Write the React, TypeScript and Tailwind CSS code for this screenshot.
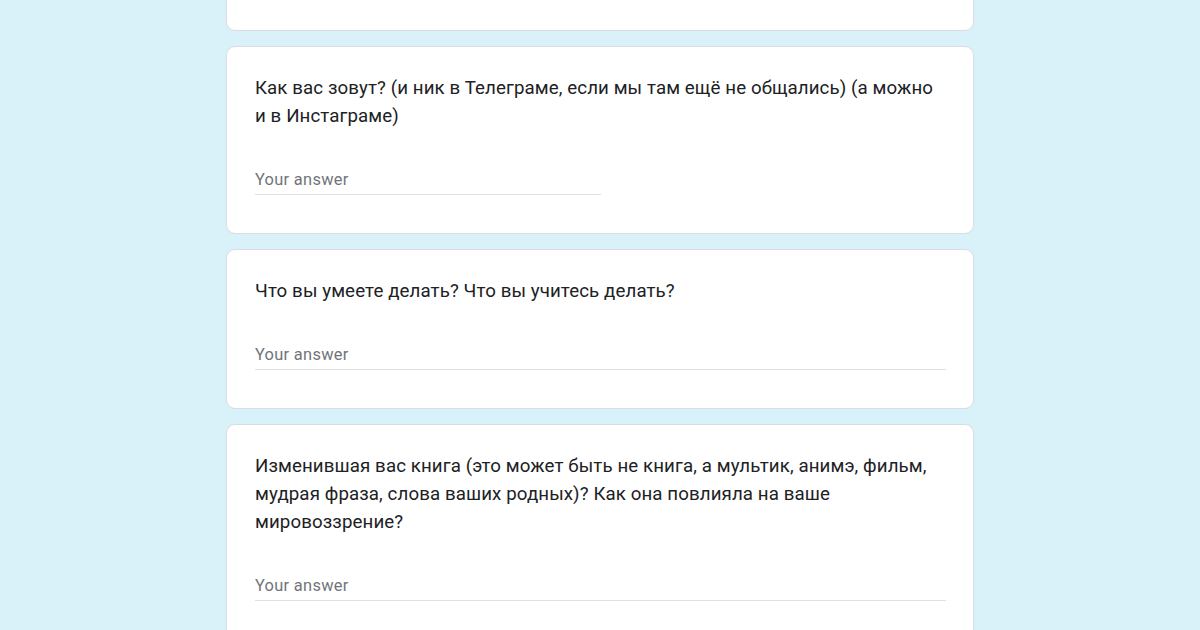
const questions = [
  {
    title: "Как вас зовут? (и ник в Телеграме, если мы там ещё не общались) (а можно и в Инстаграме)",
    short: true,
  },
  { title: "Что вы умеете делать? Что вы учитесь делать?", short: false },
  {
    title:
      "Изменившая вас книга (это может быть не книга, а мультик, анимэ, фильм, мудрая фраза, слова ваших родных)? Как она повлияла на ваше мировоззрение?",
    short: false,
  },
];

const Question = ({ title, short }: { title: string; short: boolean }) => (
  <div className="bg-white border border-[#dadce0] rounded-[9px] pl-[28px] pr-[27px] pt-[27px] pb-[38px]">
    <div className="text-[18.7px] leading-[28px] text-[#202124] tracking-[0.1px] font-['Roboto',sans-serif]">
      {title}
    </div>
    <div className={`mt-[38px] border-b border-[#e0e0e0] ${short ? "w-1/2" : "w-full"}`}>
      <div className="text-[16.4px] leading-[24px] pb-[2px] text-[#70757a] tracking-[0.3px] font-['Roboto',sans-serif]">
        Your answer
      </div>
    </div>
  </div>
);

export default function App() {
  return (
    <div className="w-[1200px] h-[630px] overflow-hidden bg-[#d9f2f9]">
      <div className="w-[748px] mx-auto -mt-[60px] flex flex-col gap-[15px]">
        <div className="bg-white border border-[#dadce0] rounded-[9px] h-[91px]" />
        {questions.map((q) => (
          <Question key={q.title} title={q.title} short={q.short} />
        ))}
      </div>
    </div>
  );
}
